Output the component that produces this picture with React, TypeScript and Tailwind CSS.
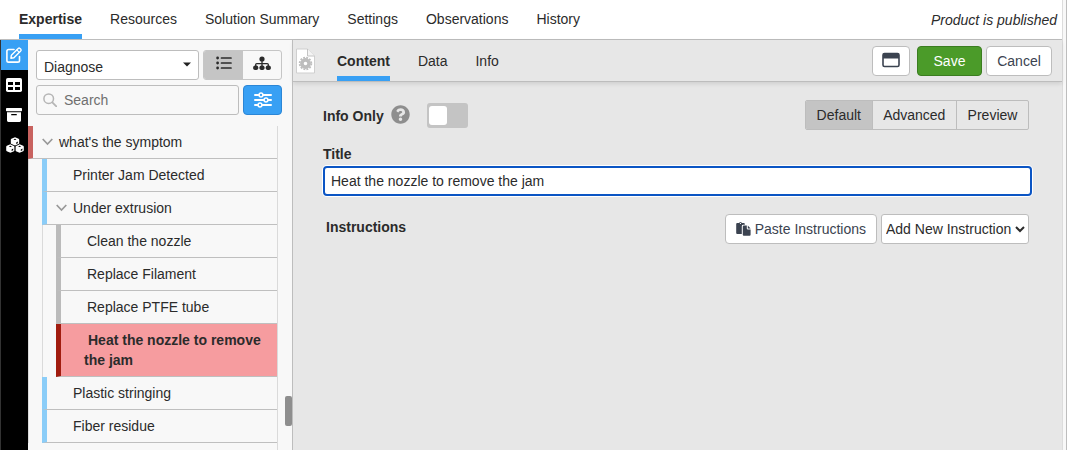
import { useState } from "react";
import clsx from "clsx";
import { FaQuestionCircle } from "react-icons/fa";

type Node = {
  id: number;
  title: string;
  bar: string;
  children?: Node[];
};

const topTabs = [
  "Expertise",
  "Resources",
  "Solution Summary",
  "Settings",
  "Observations",
  "History",
];

const tree: Node[] = [
  {
    id: 1,
    title: "what's the symptom",
    bar: "border-l-[#c8625f]",
    children: [
      { id: 2, title: "Printer Jam Detected", bar: "border-l-[#8bcdf8]" },
      {
        id: 3,
        title: "Under extrusion",
        bar: "border-l-[#8bcdf8]",
        children: [
          { id: 4, title: "Clean the nozzle", bar: "border-l-[#bbbbbb]" },
          { id: 5, title: "Replace Filament", bar: "border-l-[#bbbbbb]" },
          { id: 6, title: "Replace PTFE tube", bar: "border-l-[#bbbbbb]" },
          {
            id: 7,
            title: "Heat the nozzle to remove the jam",
            bar: "border-l-[#bbbbbb]",
          },
        ],
      },
      { id: 8, title: "Plastic stringing", bar: "border-l-[#8bcdf8]" },
      { id: 9, title: "Fiber residue", bar: "border-l-[#8bcdf8]" },
    ],
  },
];

function EditIcon() {
  return (
    <svg
      width="16"
      height="16"
      viewBox="0 0 16 16"
      fill="none"
      stroke="#fff"
      strokeLinejoin="round"
      strokeLinecap="round"
    >
      <path
        d="M8 2.5H2.6Q0.9 2.5 0.9 4.2v9.2q0 1.7 1.7 1.7h9.2q1.7 0 1.7-1.7V9.5"
        strokeWidth="1.6"
      />
      <path d="M4.9 11.2l.5-3 6.8-6.8q.9-.8 1.8 0l.7.7q.8.9 0 1.8l-6.8 6.8z" strokeWidth="1.4" />
      <path d="M10.8 2.9l2.4 2.4" strokeWidth="1.2" />
    </svg>
  );
}

function TableIcon() {
  return (
    <svg width="16" height="14" viewBox="0 0 16 14">
      <rect width="16" height="14" rx="1.8" fill="#fff" />
      <path d="M2 4h5v3H2zM9 4h5v3H9zM2 9h5v3H2zM9 9h5v3H9z" fill="#000" />
    </svg>
  );
}

function ArchiveIcon() {
  return (
    <svg width="16" height="14" viewBox="0 0 16 14">
      <rect width="16" height="3.2" rx="0.7" fill="#fff" />
      <path d="M1 4.2h14v8.4q0 1.4-1.4 1.4H2.4Q1 14 1 12.6z" fill="#fff" />
      <path d="M5.7 6.7h4.6" stroke="#000" strokeWidth="1.2" strokeLinecap="round" />
    </svg>
  );
}

function CubesIcon() {
  return (
    <svg width="18" height="16" viewBox="0 0 18 16">
      <defs>
        <g id="cube">
          <path
            d="M0-4.2L3.6-2.6Q4.2-2.3 4.2-1.6V1.9Q4.2 2.5 3.6 2.8L0 4.4-3.6 2.8Q-4.2 2.5-4.2 1.9V-1.6Q-4.2-2.3-3.6-2.6z"
            fill="#fff"
          />
          <path d="M-1.6-2L0-2.6 1.6-2 0-1.3zM1.2 1L2.8.2V1.8L1.2 2.6z" fill="#000" />
        </g>
      </defs>
      <use href="#cube" x="9" y="4.4" />
      <use href="#cube" x="4.4" y="11.4" />
      <use href="#cube" x="13.6" y="11.4" />
      <path d="M5 7.2l4 1.8 4-1.8M9 9v6.5" fill="none" stroke="#000" strokeWidth="0.7" />
    </svg>
  );
}

function ListIcon() {
  return (
    <svg width="16" height="14" viewBox="0 0 16 14" fill="#2b2b2b" stroke="#2b2b2b">
      <path d="M5.5 2h9.5M5.5 7h9.5M5.5 12h9.5" strokeWidth="1.7" strokeLinecap="round" />
      <g stroke="none">
        <circle cx="1.6" cy="2" r="1.4" />
        <circle cx="1.6" cy="7" r="1.4" />
        <circle cx="1.6" cy="12" r="1.4" />
      </g>
    </svg>
  );
}

function SitemapIcon() {
  return (
    <svg width="18" height="15" viewBox="0 0 18 15" fill="#2b2b2b">
      <circle cx="9" cy="3" r="2.6" />
      <path
        d="M9 4v7M2.7 11V8.6q0-1 1-1h10.6q1 0 1 1V11"
        fill="none"
        stroke="#2b2b2b"
        strokeWidth="1.3"
      />
      <rect x="0.2" y="9.5" width="5" height="4.6" rx="1.8" />
      <rect x="6.5" y="9.5" width="5" height="4.6" rx="1.8" />
      <rect x="12.8" y="9.5" width="5" height="4.6" rx="1.8" />
    </svg>
  );
}

function SlidersIcon() {
  return (
    <svg width="18" height="16" viewBox="0 0 18 16" stroke="#fff">
      <path d="M1 3h16M1 8h16M1 13h16" strokeWidth="2" strokeLinecap="round" />
      <g fill="#38a0f4" strokeWidth="1.5">
        <circle cx="7" cy="3" r="1.9" />
        <circle cx="12" cy="8" r="1.9" />
        <circle cx="6" cy="13" r="1.9" />
      </g>
    </svg>
  );
}

function SearchIcon() {
  return (
    <svg width="14" height="14" viewBox="0 0 14 14" fill="none" stroke="#b5b5b5">
      <circle cx="5.7" cy="5.7" r="4.8" strokeWidth="1.5" />
      <path d="M9.3 9.3l4 4" strokeWidth="1.8" strokeLinecap="round" />
    </svg>
  );
}

function PageGearIcon() {
  return (
    <svg width="19" height="26" viewBox="0 0 19 26">
      <path d="M0.5 1h11l7 7v17h-18z" fill="#fff" stroke="#cfcfcf" />
      <path d="M11.5 1v7h7" fill="#f4f4f4" stroke="#c4c4c4" />
      <circle cx="9.5" cy="15.5" r="3.6" fill="none" stroke="#bdbdbd" strokeWidth="3.6" />
      <circle
        cx="9.5"
        cy="15.5"
        r="5.9"
        fill="none"
        stroke="#bdbdbd"
        strokeWidth="1.7"
        strokeDasharray="1.9 1.19"
      />
    </svg>
  );
}

function WindowIcon() {
  return (
    <svg width="18" height="16" viewBox="0 0 18 16">
      <rect x="1" y="1.5" width="16" height="13" rx="1.5" fill="none" stroke="#3b4350" strokeWidth="1.6" />
      <path d="M1 6.5V2.5q0-1 1-1h14q1 0 1 1v4z" fill="#3b4350" />
    </svg>
  );
}

function PasteIcon() {
  return (
    <svg width="15" height="14" viewBox="0 0 15 14" fill="#3b4350">
      <path d="M1.2 1h2q.3-1 1.3-1t1.3 1h2q1 0 1 1v.7H7.2q-1.4 0-1.4 1.4V12H1.2q-1 0-1-1V2q0-1 1-1z" />
      <circle cx="4.5" cy="1.4" r="0.6" fill="#fff" />
      <path d="M7.8 3.6h3v3q0 .8.8.8h3v5.4q0 1-1 1H7.8q-1 0-1-1V4.6q0-1 1-1z" />
      <path d="M11.8 3.6l2.8 2.8h-2.8z" />
    </svg>
  );
}

function TreeRow({
  node,
  selected,
  onSelect,
}: {
  node: Node;
  selected: number;
  onSelect: (id: number) => void;
}) {
  const [open, setOpen] = useState(true);
  const active = node.id === selected;

  return (
    <li>
      <div
        className={clsx(
          "flex border-b border-b-[#bfbfbf] border-l-5 py-1.5",
          active
            ? "border-l-[#a11c0f] bg-[#f69c9f] pl-[23px] font-bold"
            : ["gap-1.5 pl-2", node.bar]
        )}
      >
        {node.children ? (
          <button
            aria-label={open ? "Collapse" : "Expand"}
            className="flex w-3 shrink-0 items-center"
            onClick={() => setOpen(!open)}
          >
            <svg
              width="12"
              height="8"
              viewBox="0 0 12 8"
              fill="none"
              stroke="#999"
              strokeWidth="1.7"
              className={open ? "" : "-rotate-90"}
            >
              <path d="M1.7 1L6.5 6l4.8-5" />
            </svg>
          </button>
        ) : (
          !active && <span className="w-3 shrink-0" />
        )}
        <button
          className={clsx("flex-1 pr-3 text-left", active && "indent-1")}
          onClick={() => onSelect(node.id)}
        >
          {node.title}
        </button>
      </div>
      {node.children && open && (
        <ul className="border-l border-[#dadada] pl-[13px]">
          {node.children.map((child) => (
            <TreeRow
              key={child.id}
              node={child}
              selected={selected}
              onSelect={onSelect}
            />
          ))}
        </ul>
      )}
    </li>
  );
}

export default function App() {
  const [topTab, setTopTab] = useState("Expertise");
  const [tab, setTab] = useState("Content");
  const [mode, setMode] = useState("Default");
  const [selected, setSelected] = useState(7);
  const [infoOnly, setInfoOnly] = useState(false);
  const [title, setTitle] = useState("Heat the nozzle to remove the jam");

  return (
    <div className="flex min-h-screen bg-[#f8f8f8] pr-[3px] border-r border-[#bdbdbd] font-['Liberation_Sans',Arial,sans-serif] text-sm text-[#2b2b2b]">
      <div className="flex min-w-0 flex-1 flex-col border-r border-[#dcdcdc]">
        {/* product tabs */}
        <header className="flex h-10 items-stretch justify-between border-b border-[#bdbdbd] bg-white pl-[19px] pr-[5px]">
          <nav className="flex gap-7">
            {topTabs.map((name) => (
              <button
                key={name}
                onClick={() => setTopTab(name)}
                className={clsx(
                  "border-b-5 pt-1",
                  topTab === name
                    ? "border-[#38a0f4] font-bold"
                    : "border-transparent"
                )}
              >
                {name}
              </button>
            ))}
          </nav>
          <p className="self-center italic">Product is published</p>
        </header>

        <div className="flex flex-1">
          {/* icon rail */}
          <nav className="flex w-7 shrink-0 flex-col border-l border-[#333] bg-black text-white">
            <button aria-label="Edit" className="flex h-[30px] items-center justify-center bg-[#38a0f4] pr-0.5">
              <EditIcon />
            </button>
            <button aria-label="Table" className="flex h-[30px] items-center justify-center pr-0.5">
              <TableIcon />
            </button>
            <button aria-label="Archive" className="flex h-[30px] items-center justify-center pr-0.5">
              <ArchiveIcon />
            </button>
            <button aria-label="Parts" className="flex h-[30px] items-center justify-center">
              <CubesIcon />
            </button>
          </nav>

          {/* tree panel */}
          <aside className="relative flex w-[265px] shrink-0 flex-col border-r border-[#bdbdbd]">
            <div className="flex flex-col gap-[5px] pt-[10px] pr-[10px] pb-[11px] pl-2">
              <div className="flex gap-1">
                <div className="relative flex-1">
                  <select
                    aria-label="Section"
                    className="h-[30px] w-full appearance-none rounded-[3px] border border-[#bdbdbd] bg-white pt-1 pl-[7px]"
                  >
                    <option>Diagnose</option>
                  </select>
                  <svg
                    className="pointer-events-none absolute top-3 right-2"
                    width="8"
                    height="5"
                    viewBox="0 0 8 5"
                  >
                    <path d="M0 0.5h8l-4 4z" fill="#222" />
                  </svg>
                </div>
                <div className="flex h-[30px] w-[79px] overflow-hidden rounded-[3px] border border-[#c6c6c6]">
                  <button aria-label="List view" className="flex w-[39px] items-center justify-center bg-[#c5c5c5] pb-1">
                    <ListIcon />
                  </button>
                  <button aria-label="Map view" className="flex flex-1 items-center justify-center pb-1">
                    <SitemapIcon />
                  </button>
                </div>
              </div>
              <div className="flex gap-1">
                <label className="flex h-[30px] min-w-0 flex-1 items-center gap-[7px] rounded-[3px] border border-[#bdbdbd] pl-1.5">
                  <SearchIcon />
                  <input
                    type="search"
                    aria-label="Search"
                    placeholder="Search"
                    className="min-w-0 flex-1 bg-transparent outline-none placeholder:text-[#6f6f6f]"
                  />
                </label>
                <button
                  aria-label="Filters"
                  className="flex h-[30px] w-[39px] items-center justify-center rounded border border-[#2b86d6] bg-[#38a0f4]"
                >
                  <SlidersIcon />
                </button>
              </div>
            </div>
            <div className="mr-[14px] flex-1 border-r border-[#dadada]">
              <ul>
                {tree.map((node) => (
                  <TreeRow
                    key={node.id}
                    node={node}
                    selected={selected}
                    onSelect={setSelected}
                  />
                ))}
              </ul>
            </div>
            {/* scroll thumb */}
            <div className="absolute right-0 bottom-6 h-[30px] w-[7px] rounded-xs bg-[#8e8e8e]" />
          </aside>

          {/* editor */}
          <main className="min-w-0 flex-1 bg-[#e7e7e7]">
            <div className="flex h-[42px] items-stretch justify-between border-b border-[#bdbdbd] pr-[10px] pl-[3px] shadow-[0_2px_4px_rgba(0,0,0,0.1)]">
              <div className="flex">
                <span className="flex w-[41px] items-center">
                  <PageGearIcon />
                </span>
                <nav className="flex gap-7">
                  {["Content", "Data", "Info"].map((name) => (
                    <button
                      key={name}
                      onClick={() => setTab(name)}
                      className={clsx(
                        "border-b-5 pt-1.5",
                        tab === name
                          ? "border-[#38a0f4] font-bold"
                          : "border-transparent"
                      )}
                    >
                      {name}
                    </button>
                  ))}
                </nav>
              </div>
              <div className="flex items-center gap-1 text-[#3b4350]">
                <button
                  aria-label="Open window"
                  className="mr-[3px] flex h-[30px] w-[38px] items-center justify-center rounded border border-[#bdbdbd] bg-white pb-0.5"
                >
                  <WindowIcon />
                </button>
                <button className="h-[30px] w-[65px] rounded border border-[#3b7d20] bg-[#4b9b29] text-white">
                  Save
                </button>
                <button className="h-[30px] w-[66px] rounded border border-[#bdbdbd] bg-white">
                  Cancel
                </button>
              </div>
            </div>

            <div className="px-[30px] pt-[18px]">
              <div className="flex items-center justify-between pr-[3px]">
                <div className="flex items-center">
                  <label htmlFor="info-only" className="pt-0.5 font-bold">
                    Info Only
                  </label>
                  <FaQuestionCircle size={19} className="mb-0.5 ml-[7px] text-[#8e8e8e]" />
                  <label
                    className={clsx(
                      "ml-[17px] flex h-[25px] w-[41px] cursor-pointer items-center rounded-[3px] px-0.5",
                      infoOnly ? "justify-end bg-[#38a0f4]" : "bg-[#c4c4c4]"
                    )}
                  >
                    <input
                      id="info-only"
                      type="checkbox"
                      className="sr-only"
                      checked={infoOnly}
                      onChange={() => setInfoOnly(!infoOnly)}
                    />
                    <span className="h-[19px] w-[18px] rounded-[3px] bg-white" />
                  </label>
                </div>
                <div className="flex h-[30px] w-56 divide-x divide-[#bdbdbd] overflow-hidden rounded-xs border border-[#bdbdbd]">
                  {["Default", "Advanced", "Preview"].map((name) => (
                    <button
                      key={name}
                      onClick={() => setMode(name)}
                      className={clsx("flex-auto", mode === name && "bg-[#c4c4c4]")}
                    >
                      {name}
                    </button>
                  ))}
                </div>
              </div>

              <label htmlFor="title" className="mt-[14px] block font-bold">
                Title
              </label>
              <input
                id="title"
                type="text"
                value={title}
                onChange={(e) => setTitle(e.target.value)}
                className="mt-0.5 block h-[30px] w-full rounded border-2 border-[#0b55c4] bg-white px-1.5 shadow-[0_0_0_1px_#fff] outline-none"
              />

              <div className="mt-[18px] flex justify-between pr-[3px] pl-[3px]">
                <h2 className="pt-[3px] font-bold">Instructions</h2>
                <div className="flex gap-1">
                  <button className="flex h-[30px] items-center gap-1 rounded border border-[#bdbdbd] bg-white px-[10px] text-[#3b4350]">
                    <PasteIcon />
                    Paste Instructions
                  </button>
                  <select
                    aria-label="Add New Instruction"
                    className="h-[30px] w-[148px] rounded-[3px] border border-[#bdbdbd] bg-white"
                  >
                    <option>Add New Instruction</option>
                  </select>
                </div>
              </div>
            </div>
          </main>
        </div>
      </div>
    </div>
  );
}
